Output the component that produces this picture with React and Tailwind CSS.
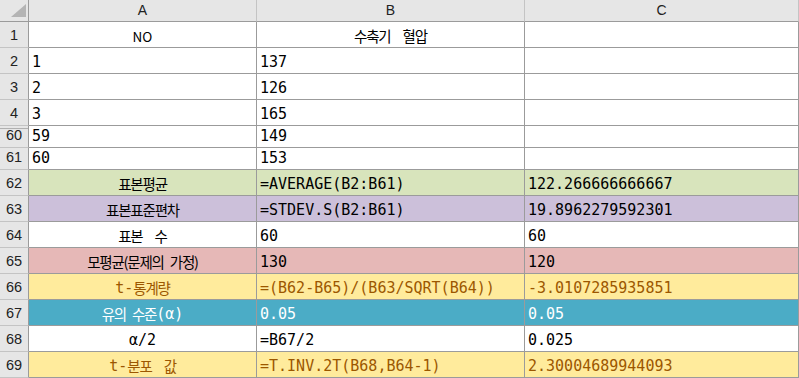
import React from 'react';

const K = ({ children }) => (
  <span className="font-['Noto_Sans_CJK_KR',sans-serif] text-[14.5px] tracking-[-1.2px] [word-spacing:4px]">{children}</span>
);
const M = ({ children }) => (
  <span className="font-['DejaVu_Sans_Mono','Noto_Sans_CJK_KR',monospace] text-[15px]">{children}</span>
);

const rows = [
  { n: '1', h: 'h-[26px]', a: <span className="font-['Noto_Sans_CJK_KR',sans-serif] text-[13.5px]">NO</span>, b: <K>수축기&nbsp; 혈압</K>, c: '', head: true },
  { n: '2', h: 'h-[26px]', a: '1', b: '137', c: '' },
  { n: '3', h: 'h-[26px]', a: '2', b: '126', c: '' },
  { n: '4', h: 'h-[26px]', a: '3', b: '165', c: '' },
  { n: '60', h: 'h-[22px]', a: '59', b: '149', c: '', hidden: true },
  { n: '61', h: 'h-[22px]', a: '60', b: '153', c: '' },
  { n: '62', h: 'h-[26px]', a: <K>표본평균</K>, b: '=AVERAGE(B2:B61)', c: '122.266666666667', bg: 'bg-[#d8e4bc]', head: true },
  { n: '63', h: 'h-[26px]', a: <K>표본표준편차</K>, b: '=STDEV.S(B2:B61)', c: '19.8962279592301', bg: 'bg-[#ccc0da]', head: true },
  { n: '64', h: 'h-[26px]', a: <K>표본&nbsp; 수</K>, b: '60', c: '60', head: true },
  { n: '65', h: 'h-[26px]', a: <K>모평균(문제의 가정)</K>, b: '130', c: '120', bg: 'bg-[#e6b8b7]', head: true },
  { n: '66', h: 'h-[26px]', a: <><M>t-</M><K>통계량</K></>, b: '=(B62-B65)/(B63/SQRT(B64))', c: '-3.0107285935851', bg: 'bg-[#ffeb9c]', fg: 'text-[#9c5700]', head: true },
  { n: '67', h: 'h-[26px]', a: <><K>유의 수준</K><M>(α)</M></>, b: '0.05', c: '0.05', bg: 'bg-[#4bacc6]', fg: 'text-white', head: true },
  { n: '68', h: 'h-[26px]', a: <M>α/2</M>, b: '=B67/2', c: '0.025', head: true },
  { n: '69', h: 'h-[26px]', a: <><M>t-</M><K>분포&nbsp; 값</K></>, b: '=T.INV.2T(B68,B64-1)', c: '2.30004689944093', bg: 'bg-[#ffeb9c]', fg: 'text-[#9c5700]', head: true },
];

function App() {
  const cell = "border-r border-b border-[#9b9b9b] flex items-end pb-[2px] px-[3px] leading-[18px] overflow-hidden whitespace-nowrap";
  return (
    <div className="w-[799px] h-[378px] bg-white text-black overflow-hidden">
      <div className="grid grid-cols-[29px_228px_268px_274px]">
        {/* column headers */}
        <div className="h-[22px] bg-[#e6e6e6] border-r border-b border-[#9b9b9b] relative">
          <svg width="29" height="22" className="absolute inset-0">
            <polygon points="11,17 26,17 26,4" fill="#b4b4b4" />
          </svg>
        </div>
        {['A', 'B', 'C'].map(l => (
          <div key={l} className="h-[22px] bg-[#e6e6e6] border-r border-b border-r-[#c4c4c4] border-b-[#9b9b9b] flex items-center justify-center font-['Liberation_Sans',sans-serif] text-[14px] text-[#222]">
            {l}
          </div>
        ))}

        {rows.map(r => (
          <React.Fragment key={r.n}>
            <div className={`${r.h} bg-[#e6e6e6] border-r border-b border-r-[#9b9b9b] border-b-[#c4c4c4] flex items-end justify-center pb-[3px] font-['Liberation_Sans',sans-serif] text-[14.5px] leading-[18px] text-[#222] ${r.hidden ? 'shadow-[inset_0_2px_0_#e6e6e6,inset_0_3px_0_#b0b0b0]' : ''}`}>
              {r.n}
            </div>
            <div className={`${cell} ${r.h} ${r.bg || ''} ${r.fg || ''} ${r.head ? 'justify-center' : ''} font-['DejaVu_Sans_Mono','Noto_Sans_CJK_KR',monospace] text-[15px]`}>
              {r.a}
            </div>
            <div className={`${cell} ${r.h} ${r.bg || ''} ${r.fg || ''} ${r.n === '1' ? 'justify-center' : ''} font-['DejaVu_Sans_Mono','Noto_Sans_CJK_KR',monospace] text-[15px]`}>
              {r.b}
            </div>
            <div className={`${cell} ${r.h} ${r.bg || ''} ${r.fg || ''} font-['DejaVu_Sans_Mono','Noto_Sans_CJK_KR',monospace] text-[15px]`}>
              {r.c}
            </div>
          </React.Fragment>
        ))}
      </div>
    </div>
  );
}

export default App;
